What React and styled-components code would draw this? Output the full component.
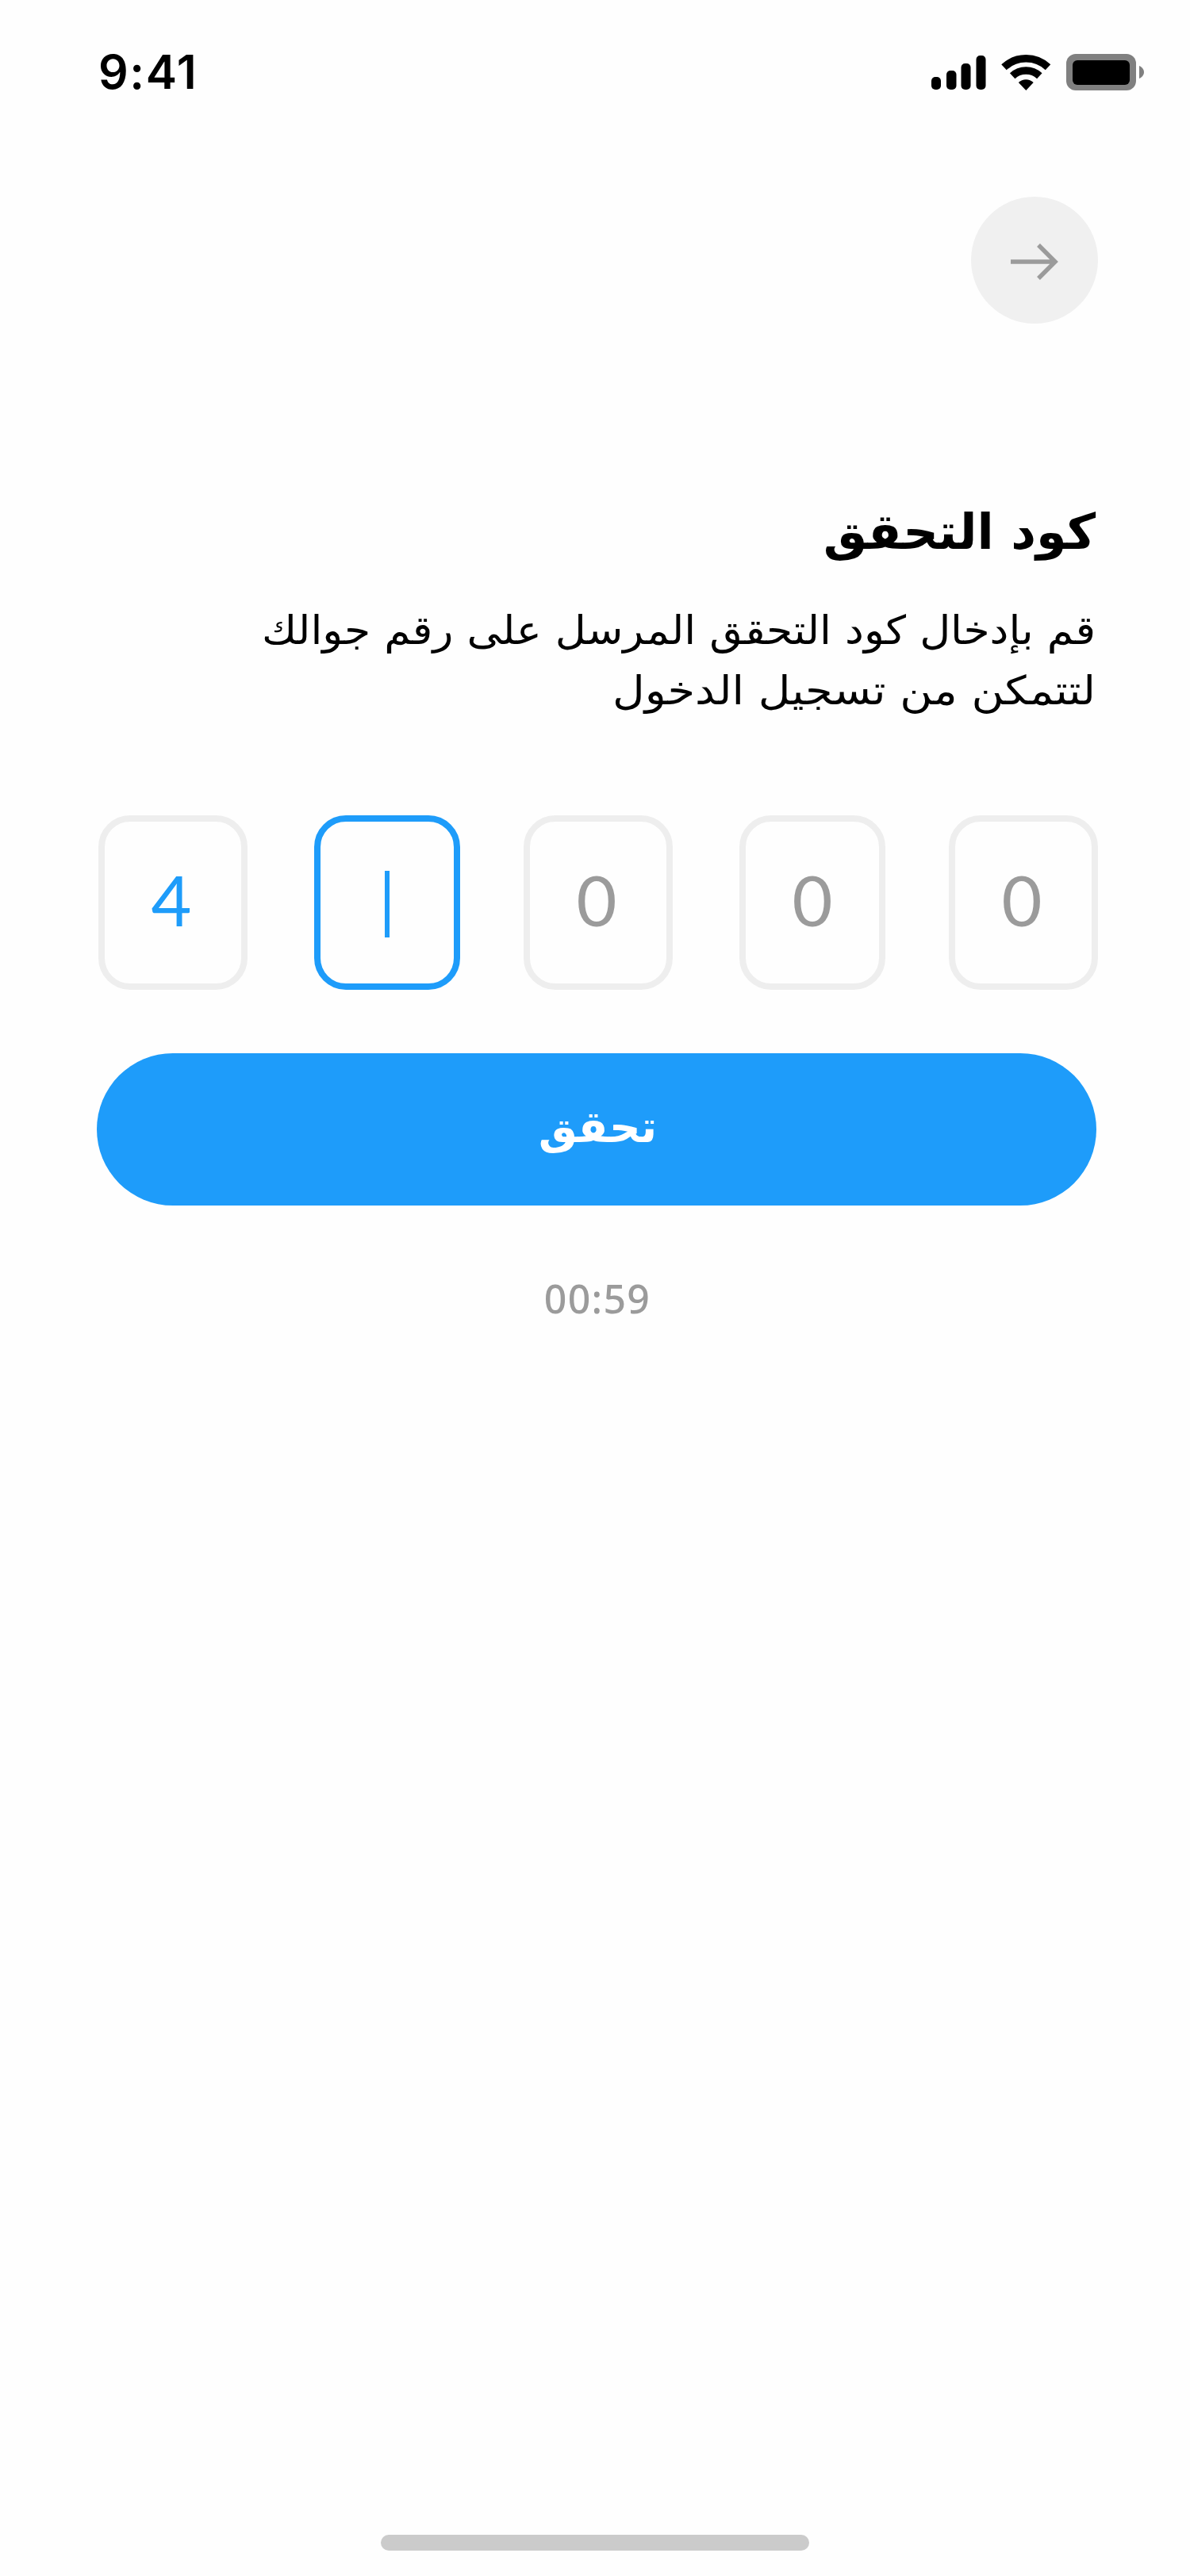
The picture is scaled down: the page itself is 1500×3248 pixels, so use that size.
import React from 'react';
import styled, { createGlobalStyle } from 'styled-components';

const BLUE = '#1e9cfa';

const GlobalStyle = createGlobalStyle`
  * { box-sizing: border-box; }
  body { margin: 0; background: #fefefe; }
`;

const Screen = styled.main`
  width: 1500px;
  height: 3248px;
  display: flex;
  flex-direction: column;
  background: #fefefe;
  color: #000;
  overflow: hidden;
  font-family: 'Noto Sans', 'DejaVu Sans', sans-serif;
`;

const StatusBar = styled.header`
  height: 182px;
  padding: 0 58px 0 124px;
  display: flex;
  justify-content: space-between;
  flex: none;
`;

const Clock = styled.time`
  margin-top: 56px;
  height: 70px;
  font: 570 59px/70px Inter, sans-serif;
  letter-spacing: 1.6px;
`;

const StatusIcons = styled.svg`
  width: 268px;
  height: 46px;
  margin-top: 68px;
  display: block;
`;

const TopBar = styled.nav`
  height: 226px;
  padding: 66px 116px 0 0;
  display: flex;
  justify-content: flex-end;
  flex: none;
`;

const BackButton = styled.button`
  width: 160px;
  height: 160px;
  padding: 0;
  border: 0;
  border-radius: 50%;
  background: #f0f0f0;
`;

const ArrowIcon = styled.svg`
  width: 160px;
  height: 160px;
  display: block;
`;

const Content = styled.section`
  padding: 206px 118px 0 122px;
  display: flex;
  flex-direction: column;
`;

const Title = styled.h1`
  margin: 0;
  height: 120px;
  padding-right: 1px;
  direction: rtl;
  font: 700 62px/114px 'DejaVu Sans', sans-serif;
`;

const Description = styled.p`
  margin: 23px 0 0;
  padding-right: 1px;
  direction: rtl;
  white-space: nowrap;
  font: 400 50px/76px 'DejaVu Sans', sans-serif;
`;

const Line = styled.span`
  display: block;
  transform: scaleX(${(p) => p.$stretch});
  transform-origin: right center;
`;

const CodeRow = styled.div`
  margin: 119px -2px 0 2px;
  display: flex;
`;

const CodeBox = styled.div`
  width: ${(p) => p.$width}px;
  height: 220px;
  margin-right: ${(p) => p.$gap}px;
  padding: ${(p) => (p.$active ? '4px 0 0' : `0 ${p.$width === 184 ? 0 : 4}px 8px 0`)};
  display: flex;
  flex: none;
  align-items: center;
  justify-content: center;
  border: 8px solid ${(p) => (p.$active ? BLUE : '#eeeeee')};
  border-radius: 40px;
  color: ${(p) => (p.$filled ? BLUE : '#9b9b9b')};
  font: 400 88px/120px Lato, sans-serif;
`;

const Caret = styled.i`
  width: 6px;
  height: 84px;
  background: ${BLUE};
`;

const VerifyButton = styled.button`
  width: 1260px;
  height: 192px;
  margin-top: 80px;
  padding: 0 0 6px 3px;
  border: 0;
  border-radius: 96px;
  background: ${BLUE};
  color: #fff;
  direction: rtl;
  font: 700 55px/90px 'DejaVu Sans', sans-serif;
`;

const Timer = styled.div`
  margin-top: 82px;
  padding-left: 2px;
  text-align: center;
  color: #9b9b9b;
  font-size: 50px;
  font-weight: 500;
  letter-spacing: 1.3px;
  line-height: 70px;
`;

const HomeArea = styled.footer`
  margin-top: auto;
  height: 52px;
  display: flex;
  justify-content: center;
`;

const HomeIndicator = styled.div`
  width: 540px;
  height: 20px;
  border-radius: 10px;
  background: #cbcbcb;
`;

const CELLS = [
  { width: 188, gap: 84, value: '4', filled: true },
  { width: 184, gap: 80, active: true },
  { width: 188, gap: 84, value: '0' },
  { width: 184, gap: 80, value: '0' },
  { width: 188, gap: 0, value: '0' },
];

export default function App() {
  return (
    <Screen>
      <GlobalStyle />
      <StatusBar>
        <Clock>9:41</Clock>
        <StatusIcons viewBox="0 0 268 46">
          <rect x="0" y="29" width="12" height="16" rx="5" />
          <rect x="19" y="21" width="12.5" height="24" rx="5" />
          <rect x="37.5" y="12" width="12" height="33" rx="5" />
          <rect x="56.5" y="2" width="12" height="43" rx="5" />
          <g fill="none" stroke="#000" strokeWidth="9.5">
            <path d="M91.5 16.800a40.5 40.5 0 0 1 55.5 0" />
            <path d="M102.2 27.700a25 25 0 0 1 34.1 0" />
          </g>
          <path d="M109.8 36a13.6 13.6 0 0 1 18.9 0L119.3 46z" />
          <rect x="170" y="0" width="88" height="46" rx="12" fill="#808080" />
          <rect x="178" y="8" width="72" height="31" rx="6" />
          <path d="M262 15v16c3-1.200 6-4.300 6-8s-3-6.800-6-8z" fill="#808080" />
        </StatusIcons>
      </StatusBar>
      <TopBar>
        <BackButton aria-label="رجوع">
          <ArrowIcon viewBox="0 0 160 160" fill="none" stroke="#9b9b9b" strokeWidth="5.500">
            <path d="M50 82h57M85 61l21 21-21 21" />
          </ArrowIcon>
        </BackButton>
      </TopBar>
      <Content>
        <Title>كود التحقق</Title>
        <Description>
          <Line $stretch={1.072}>قم بإدخال كود التحقق المرسل على رقم جوالك</Line>
          <Line $stretch={1.118}>لتتمكن من تسجيل الدخول</Line>
        </Description>
        <CodeRow>
          {CELLS.map((cell, i) => (
            <CodeBox
              key={i}
              $width={cell.width}
              $gap={cell.gap}
              $active={cell.active}
              $filled={cell.filled}
            >
              {cell.active ? <Caret /> : cell.value}
            </CodeBox>
          ))}
        </CodeRow>
        <VerifyButton>تحقق</VerifyButton>
        <Timer>00:59</Timer>
      </Content>
      <HomeArea>
        <HomeIndicator />
      </HomeArea>
    </Screen>
  );
}
